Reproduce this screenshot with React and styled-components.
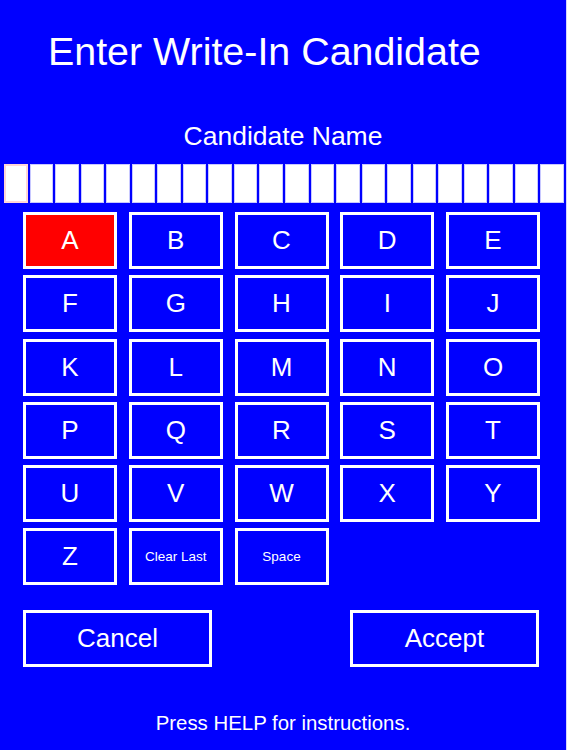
import React from 'react'
import styled, {createGlobalStyle} from 'styled-components';

const GlobalStyle = createGlobalStyle`
    html, body {
        margin: 0;
        padding: 0;
        background: #0000ff;
    }
    body {
        font-family: "Liberation Sans", Arial, sans-serif;
        color: white;
    }
`

const LETTERS = 'ABCDEFGHIJKLMNOPQRSTUVWXYZ'.split('');
const NAME_LENGTH = 22;

const App = () => {
    const selected = 'A';

    return (
        <>
            <GlobalStyle/>
            <Screen>
                <Title>Enter Write-In Candidate</Title>
                <FieldLabel>Candidate Name</FieldLabel>
                <NameRow>
                    {Array.from({length: NAME_LENGTH}).map((_, i) => (
                        <NameCell key={i} active={i === 0} />
                    ))}
                </NameRow>
                <Keyboard>
                    {LETTERS.map(letter => (
                        <Key key={letter} selected={letter === selected}>{letter}</Key>
                    ))}
                    <Key small>Clear Last</Key>
                    <Key small>Space</Key>
                </Keyboard>
                <ActionRow>
                    <ActionButton>Cancel</ActionButton>
                    <ActionButton>Accept</ActionButton>
                </ActionRow>
                <HelpText>Press HELP for instructions.</HelpText>
            </Screen>
        </>
    )
}

export default App;

const Screen = styled.div`
    width: 566px;
    height: 750px;
    border-right: 1px solid #d4d4ff;
    background: #0000ff;
    overflow: hidden;
`

const Title = styled.h1`
    margin: 32px 0 0 0;
    padding-left: 48px;
    font-size: 39.4px;
    line-height: 39px;
    font-weight: normal;
`

const FieldLabel = styled.p`
    margin: 53px 0 0 0;
    text-align: center;
    font-size: 26.5px;
    line-height: 25px;
`

const NameRow = styled.div`
    display: grid;
    grid-template-columns: repeat(${NAME_LENGTH}, 1fr);
    column-gap: 2px;
    width: 560px;
    margin: 15px 0 0 4px;
    height: 39px;
`

const NameCell = styled.div`
    background: white;
    border: ${props => props.active ? '2px solid #ffd6d6' : '1px solid #c8c8ff'};
`

const Keyboard = styled.div`
    display: grid;
    grid-template-columns: repeat(5, 94px);
    grid-auto-rows: 57px;
    column-gap: 11.75px;
    row-gap: 6.25px;
    margin: 9px 0 0 23px;
`

const Key = styled.div`
    display: flex;
    align-items: center;
    justify-content: center;
    box-sizing: border-box;
    border: 3px solid white;
    background: ${props => props.selected ? '#ff0000' : '#0000ff'};
    font-size: ${props => props.small ? '13.5px' : '26px'};
`

const ActionRow = styled.div`
    display: flex;
    justify-content: space-between;
    width: 516px;
    margin: 25px 0 0 23px;
`

const ActionButton = styled.div`
    display: flex;
    align-items: center;
    justify-content: center;
    box-sizing: border-box;
    width: 189px;
    height: 57px;
    border: 3px solid white;
    font-size: 26px;
`

const HelpText = styled.p`
    margin: 46px 0 0 0;
    text-align: center;
    font-size: 20.4px;
    line-height: 20px;
`
